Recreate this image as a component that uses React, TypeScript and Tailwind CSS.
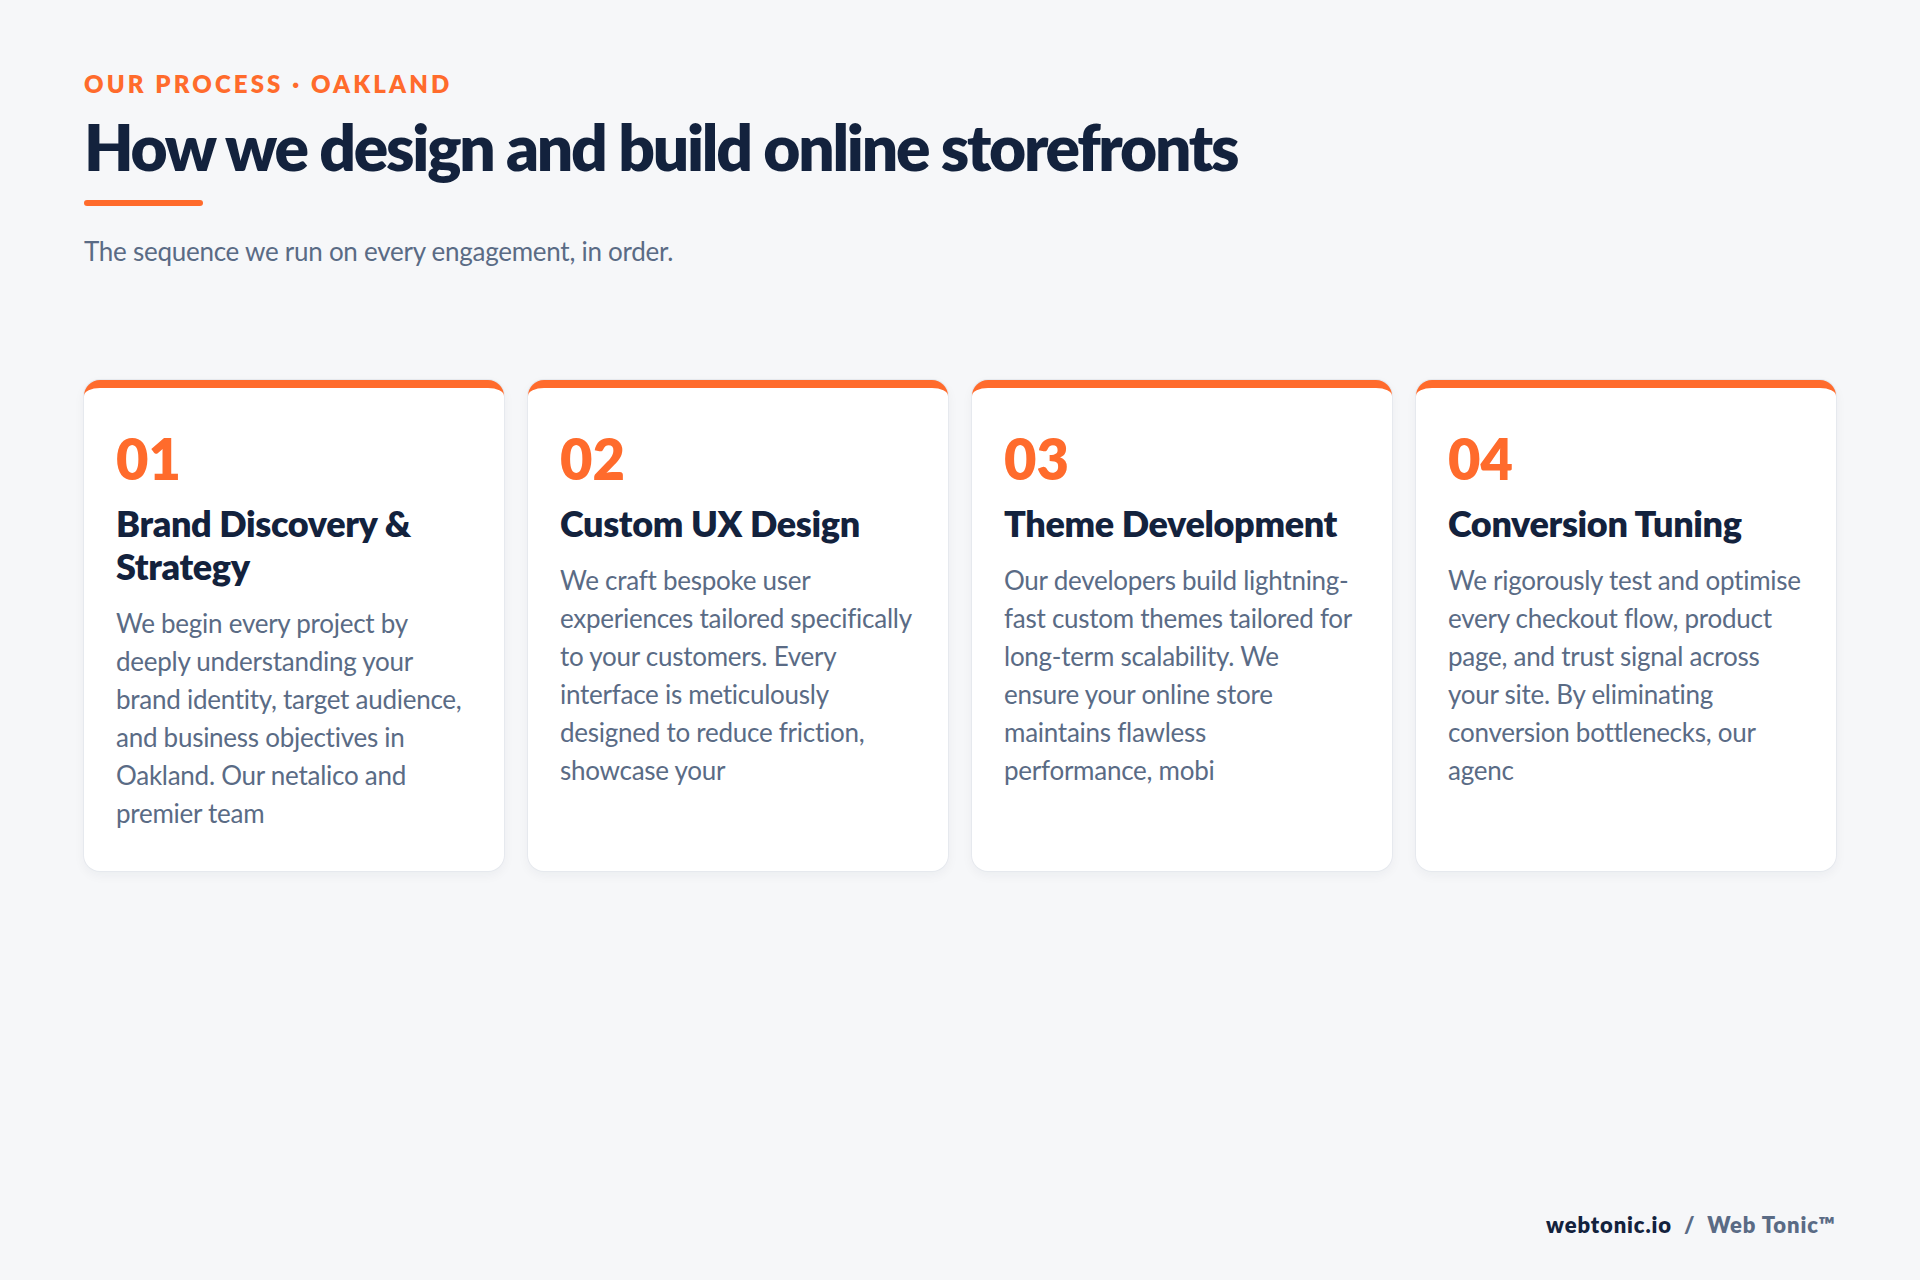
export default function App() {
  const cards = [
    { n: "01", t: "Brand Discovery & Strategy", b: "We begin every project by deeply understanding your brand identity, target audience, and business objectives in Oakland. Our netalico and premier team" },
    { n: "02", t: "Custom UX Design", b: "We craft bespoke user experiences tailored specifically to your customers. Every interface is meticulously designed to reduce friction, showcase your" },
    { n: "03", t: "Theme Development", b: "Our developers build lightning-fast custom themes tailored for long-term scalability. We ensure your online store maintains flawless performance, mobi" },
    { n: "04", t: "Conversion Tuning", b: "We rigorously test and optimise every checkout flow, product page, and trust signal across your site. By eliminating conversion bottlenecks, our agenc" },
  ];
  return (
    <div className="min-h-[1280px] flex flex-col bg-[#f6f7f9] px-[84px] pt-[71px] pb-[39px]" style={{ fontFamily: "Lato, 'Noto Sans', sans-serif" }}>
      <div className="text-[24px] leading-[26px] font-extrabold tracking-[0.13em] text-[#ff6b2c]">OUR PROCESS · OAKLAND</div>
      <h1 className="mt-[15px] text-[64px] leading-[70px] font-extrabold tracking-[-0.035em] text-[#13223d]">How we design and build online storefronts</h1>
      <div className="mt-[18px] h-[6px] w-[119px] rounded-full bg-[#ff6b2c]" />
      <p className="mt-[29px] text-[26px] leading-[32px] tracking-[-0.01em] text-[#5a6b85]">The sequence we run on every engagement, in order.</p>
      <div className="mt-[113px] grid grid-cols-4 gap-[24px]">
        {cards.map((c) => (
          <div key={c.n} className="rounded-[16px] bg-white border-t-[8px] border-[#ff6b2c] shadow-[0_0_0_1px_#e6e9ee,0_4px_12px_rgba(20,30,50,0.05)] px-[32px] pt-[43px] pb-[39px] min-h-[489px]">
            <div className="text-[56px] leading-[56px] font-extrabold text-[#ff6b2c]">{c.n}</div>
            <h2 className="mt-[15px] text-[36px] leading-[43px] font-extrabold tracking-[-0.01em] text-[#13223d]">{c.t}</h2>
            <p className="mt-[16px] text-[26px] leading-[38px] tracking-[-0.01em] text-[#5a6b85]">{c.b}</p>
          </div>
        ))}
      </div>
      <div className="mt-auto self-end text-[22px] font-extrabold tracking-[0.04em] whitespace-pre">
        <span className="text-[#13223d]">webtonic.io</span>
        <span className="text-[#5a6b85]">{"  /  Web Tonic™"}</span>
      </div>
    </div>
  );
}
